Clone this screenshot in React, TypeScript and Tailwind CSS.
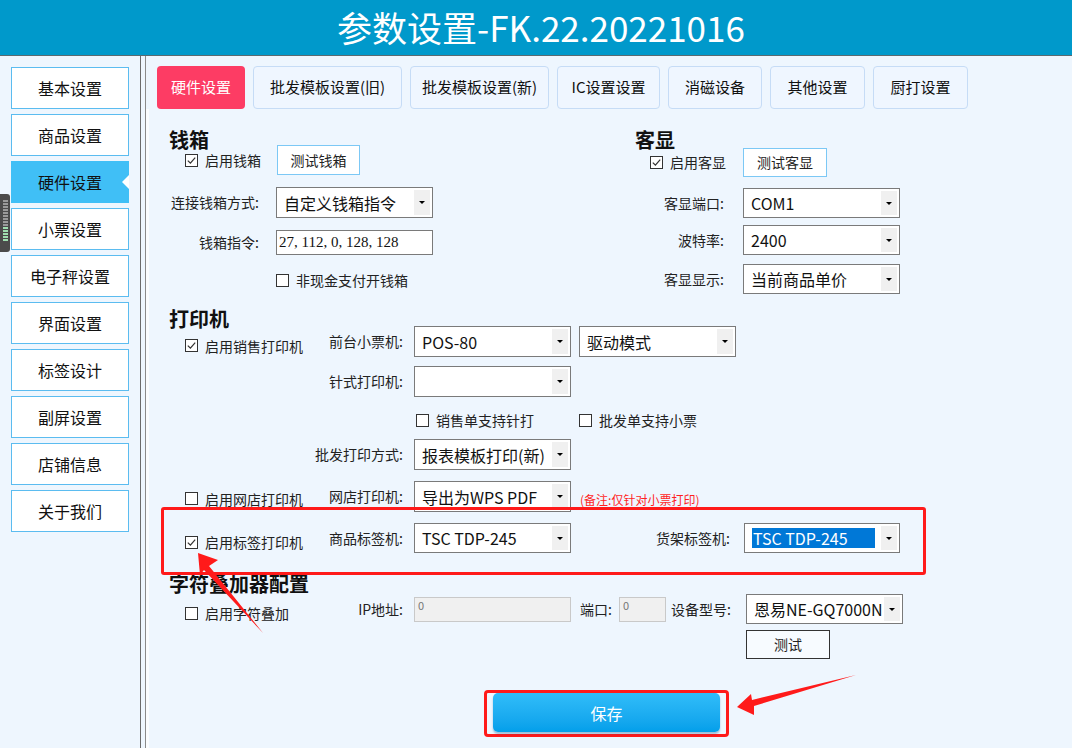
import React from "react";

const FONT = { fontFamily: '"Noto Sans CJK SC", "Noto Sans", sans-serif' };

const Check = ({ checked = false }: { checked?: boolean }) => (
  <span className="flex h-[13px] w-[13px] shrink-0 items-center justify-center border border-[#333] bg-white">
    {checked && (
      <svg width="11" height="11" viewBox="0 0 11 11">
        <path d="M1.8 5.6 L4.4 8.2 L9.2 2.6" fill="none" stroke="#333" strokeWidth="1.2" />
      </svg>
    )}
  </span>
);

const CheckLabel = ({ checked = false, text, className = "" }: { checked?: boolean; text: string; className?: string }) => (
  <div className={"flex items-center gap-[7px] text-[14px] leading-none text-[#222] " + className}>
    <Check checked={checked} />
    <span>{text}</span>
  </div>
);

const Arrow = () => (
  <span className="mx-[2px] my-[2px] flex w-[16px] items-center justify-center self-stretch bg-[#f0f0f0]">
    <span className="h-0 w-0 border-l-[3px] border-r-[3px] border-t-[3px] border-l-transparent border-r-transparent border-t-black" />
  </span>
);

const Select = ({ value, className = "w-[157px] h-[31px]", highlight = false }: { value: string; className?: string; highlight?: boolean }) => (
  <div className={"flex shrink-0 items-stretch border border-[#7a7a7a] bg-white " + className}>
    {highlight ? (
      <div className="my-[4px] ml-[7px] mr-[4px] flex flex-1 items-center bg-[#0078d7] px-[1px] text-[16px] text-white">{value}</div>
    ) : (
      <div className="flex flex-1 items-center overflow-hidden whitespace-nowrap pl-[7px] text-[16px] text-[#111]">{value}</div>
    )}
    <Arrow />
  </div>
);

const Label = ({ text, className }: { text: string; className: string }) => (
  <span className={"shrink-0 text-right text-[14px] text-[#222] " + className}>{text}</span>
);

const Heading = ({ text, className = "" }: { text: string; className?: string }) => (
  <div className={"h-[20px] text-[20px] font-bold leading-[20px] text-[#111] " + className}>{text}</div>
);

const sideItems = ["基本设置", "商品设置", "硬件设置", "小票设置", "电子秤设置", "界面设置", "标签设计", "副屏设置", "店铺信息", "关于我们"];

const tabs = [
  { t: "硬件设置", w: "w-[88px]" },
  { t: "批发模板设置(旧)", w: "w-[149px]" },
  { t: "批发模板设置(新)", w: "w-[139px]" },
  { t: "IC设置设置", w: "w-[103px]" },
  { t: "消磁设备", w: "w-[94px]" },
  { t: "其他设置", w: "w-[95px]" },
  { t: "厨打设置", w: "w-[95px]" },
];

export default function App() {
  return (
    <div className="relative h-[748px] w-[1072px] overflow-hidden bg-[#eef6fe]" style={FONT}>
      <div className="flex h-[56px] items-center justify-center border-b border-[#5a6a70] bg-[#0099cb] pl-[10px] text-[35px] text-white">
        参数设置-FK.22.20221016
      </div>

      <div className="flex h-[692px]">
        {/* sidebar */}
        <div className="flex w-[140px] shrink-0 flex-col gap-[5px] pl-[11px] pt-[11px]">
          {sideItems.map((s, i) =>
            i === 2 ? (
              <div key={s} className="relative flex h-[42px] w-[118px] items-center justify-center bg-[#40bff6] text-[16px] text-[#111]">
                {s}
                <span className="absolute right-0 top-[14px] h-0 w-0 border-b-[7px] border-r-[7px] border-t-[7px] border-b-transparent border-r-white border-t-transparent" />
              </div>
            ) : (
              <div key={s} className="flex h-[42px] w-[118px] items-center justify-center border border-[#5bbcf0] bg-white text-[16px] text-[#111]">
                {s}
              </div>
            )
          )}
        </div>
        <div className="w-[1px] shrink-0 bg-[#6b6b6b]" />
        <div className="w-[4px] shrink-0" />
        <div className="w-[1px] shrink-0 bg-[#8a8a8a]" />

        {/* main */}
        <div className="flex flex-1 flex-col">
          <div className="mt-[10px] flex h-[43px] gap-[8px] pl-[11px]">
            {tabs.map((t, i) => (
              <div
                key={t.t}
                className={
                  "flex items-center justify-center rounded-[4px] text-[15px] " +
                  t.w +
                  (i === 0 ? " bg-[#fd3c64] text-white" : " border border-[#c6dcf6] bg-[#eff6ff] text-[#111]")
                }
              >
                {t.t}
              </div>
            ))}
          </div>

          <div className="flex flex-1 flex-col border-l-[3px] border-[#fbfdff] pl-[8px]">
            {/* top: cash box + customer display */}
            <div className="flex h-[185px]">
              <div className="flex w-[478px] flex-col">
                <Heading text="钱箱" className="mt-[21px] pl-[12px]" />
                <div className="-mt-[5px] flex h-[30px] items-center pl-[28px]">
                  <CheckLabel checked text="启用钱箱" className="w-[92px]" />
                  <div className="flex h-[30px] w-[83px] items-center justify-center border border-[#7cc8f5] bg-white text-[14px] text-[#222]">测试钱箱</div>
                </div>
                <div className="mt-[12px] flex h-[31px] items-center">
                  <Label text="连接钱箱方式:" className="w-[102px]" />
                  <Select value="自定义钱箱指令" className="ml-[17px] h-[31px] w-[157px]" />
                </div>
                <div className="mt-[12px] flex h-[25px] items-center">
                  <Label text="钱箱指令:" className="w-[102px]" />
                  <div className="ml-[17px] flex h-[25px] w-[157px] items-center border border-[#7a7a7a] bg-white pl-[2px] text-[15px] text-[#111]" style={{ fontFamily: '"Liberation Serif", serif' }}>
                    27, 112, 0, 128, 128
                  </div>
                </div>
                <div className="mt-[17px] flex h-[16px] items-center pl-[119px]">
                  <CheckLabel text="非现金支付开钱箱" />
                </div>
              </div>

              <div className="flex flex-col">
                <Heading text="客显" className="mt-[21px]" />
                <div className="-mt-[3px] flex h-[30px] items-center pl-[15px]">
                  <CheckLabel checked text="启用客显" className="w-[93px]" />
                  <div className="flex h-[29px] w-[84px] items-center justify-center border border-[#7cc8f5] bg-white text-[14px] text-[#222]">测试客显</div>
                </div>
                <div className="mt-[11px] flex h-[30px] items-center">
                  <Label text="客显端口:" className="w-[89px]" />
                  <Select value="COM1" className="ml-[19px] h-[30px] w-[157px]" />
                </div>
                <div className="mt-[7px] flex h-[30px] items-center">
                  <Label text="波特率:" className="w-[89px]" />
                  <Select value="2400" className="ml-[19px] h-[30px] w-[157px]" />
                </div>
                <div className="mt-[9px] flex h-[30px] items-center">
                  <Label text="客显显示:" className="w-[89px]" />
                  <Select value="当前商品单价" className="ml-[19px] h-[30px] w-[157px]" />
                </div>
              </div>
            </div>

            {/* printers */}
            <Heading text="打印机" className="mt-[15px] pl-[12px]" />
            <div className="-mt-[3px] flex h-[31px] items-center pl-[28px]">
              <CheckLabel checked text="启用销售打印机" className="relative top-[4px] w-[130px]" />
              <Label text="前台小票机:" className="w-[88px]" />
              <Select value="POS-80" className="ml-[11px] h-[31px] w-[157px]" />
              <Select value="驱动模式" className="ml-[8px] h-[31px] w-[157px]" />
            </div>
            <div className="mt-[9px] flex h-[31px] items-center pl-[158px]">
              <Label text="针式打印机:" className="w-[88px]" />
              <Select value="" className="ml-[11px] h-[31px] w-[157px]" />
            </div>
            <div className="mt-[15px] flex h-[16px] items-center pl-[259px]">
              <CheckLabel text="销售单支持针打" className="w-[163px]" />
              <CheckLabel text="批发单支持小票" />
            </div>
            <div className="mt-[11px] flex h-[31px] items-center pl-[158px]">
              <Label text="批发打印方式:" className="w-[88px]" />
              <Select value="报表模板打印(新)" className="ml-[11px] h-[31px] w-[157px]" />
            </div>
            <div className="mt-[11px] flex h-[31px] items-center pl-[28px]">
              <CheckLabel text="启用网店打印机" className="relative top-[2px] w-[130px]" />
              <Label text="网店打印机:" className="w-[88px]" />
              <Select value="导出为WPS PDF" className="ml-[11px] h-[31px] w-[157px]" />
              <span className="relative top-[3px] ml-[9px] text-[12px] text-[#ff1f1f]">(备注:仅针对小票打印)</span>
            </div>

            <div className="relative -mt-[5px] ml-[4px] h-[68px] w-[765px] rounded-[3px] border-[3px] border-[#ff1a1a] pt-[13px]">
              <div className="flex h-[30px] items-center pl-[21px]">
                <CheckLabel checked text="启用标签打印机" className="relative top-[4px] w-[130px]" />
                <Label text="商品标签机:" className="w-[88px]" />
                <Select value="TSC TDP-245" className="ml-[11px] h-[30px] w-[157px]" />
                <Label text="货架标签机:" className="w-[159px]" />
                <Select value="TSC TDP-245" highlight className="ml-[14px] h-[30px] w-[156px]" />
              </div>
            </div>

            <Heading text="字符叠加器配置" className="-mt-[1px] pl-[12px]" />
            <div className="flex h-[30px] items-center pl-[28px]">
              <CheckLabel text="启用字符叠加" className="relative top-[4px] w-[130px]" />
              <Label text="IP地址:" className="w-[88px]" />
              <div className="ml-[11px] h-[25px] w-[157px] border border-[#c9c9c9] bg-[#f0f0f0] pl-[3px] text-[11px] leading-[14px] text-[#777]">0</div>
              <span className="ml-[9px] w-[34px] text-[14px] text-[#222]">端口:</span>
              <div className="ml-[5px] h-[25px] w-[47px] border border-[#c9c9c9] bg-[#f0f0f0] pl-[3px] text-[11px] leading-[14px] text-[#777]">0</div>
              <span className="ml-[5px] w-[69px] text-[14px] text-[#222]">设备型号:</span>
              <Select value="恩易NE-GQ7000N·" className="ml-[6px] h-[30px] w-[157px]" />
            </div>
            <div className="ml-[589px] mt-[6px] flex h-[29px] w-[84px] items-center justify-center border border-[#333] bg-[#f7fbff] text-[14px] text-[#222]">
              测试
            </div>

            <div className="ml-[327px] mt-[31px] flex h-[47px] w-[245px] rounded-[4px] border-[3px] border-[#ff1a1a] px-[6px] pb-[2px]">
              <div className="flex flex-1 items-center justify-center rounded-[5px] bg-gradient-to-b from-[#30bdf9] to-[#029fea] text-[16px] text-white shadow-[0_2px_2px_rgba(0,80,140,0.35)]">
                保存
              </div>
            </div>
          </div>
        </div>
      </div>

      {/* floating volume widget on the left edge */}
      <div className="absolute left-0 top-[194px] flex h-[58px] w-[10px] flex-col items-center gap-[1px] rounded-r-[3px] bg-[#4b4b4b] pt-[6px]">
        {Array.from({ length: 14 }).map((_, i) => (
          <span key={i} className={"h-[2px] w-[5px] " + (i > 8 ? "bg-[#9fe0b0]" : "bg-[#9a9a9a]")} />
        ))}
      </div>

      {/* annotation arrows */}
      <svg className="pointer-events-none absolute left-0 top-0" width="1072" height="748">
        <polygon points="198,553 218,560 209,566 263,633 204,570 200,575" fill="#ff1a1a" />
        <polygon points="737,707 751,694 752,700 856,675 754,706 754,715" fill="#ff1a1a" />
      </svg>
    </div>
  );
}
